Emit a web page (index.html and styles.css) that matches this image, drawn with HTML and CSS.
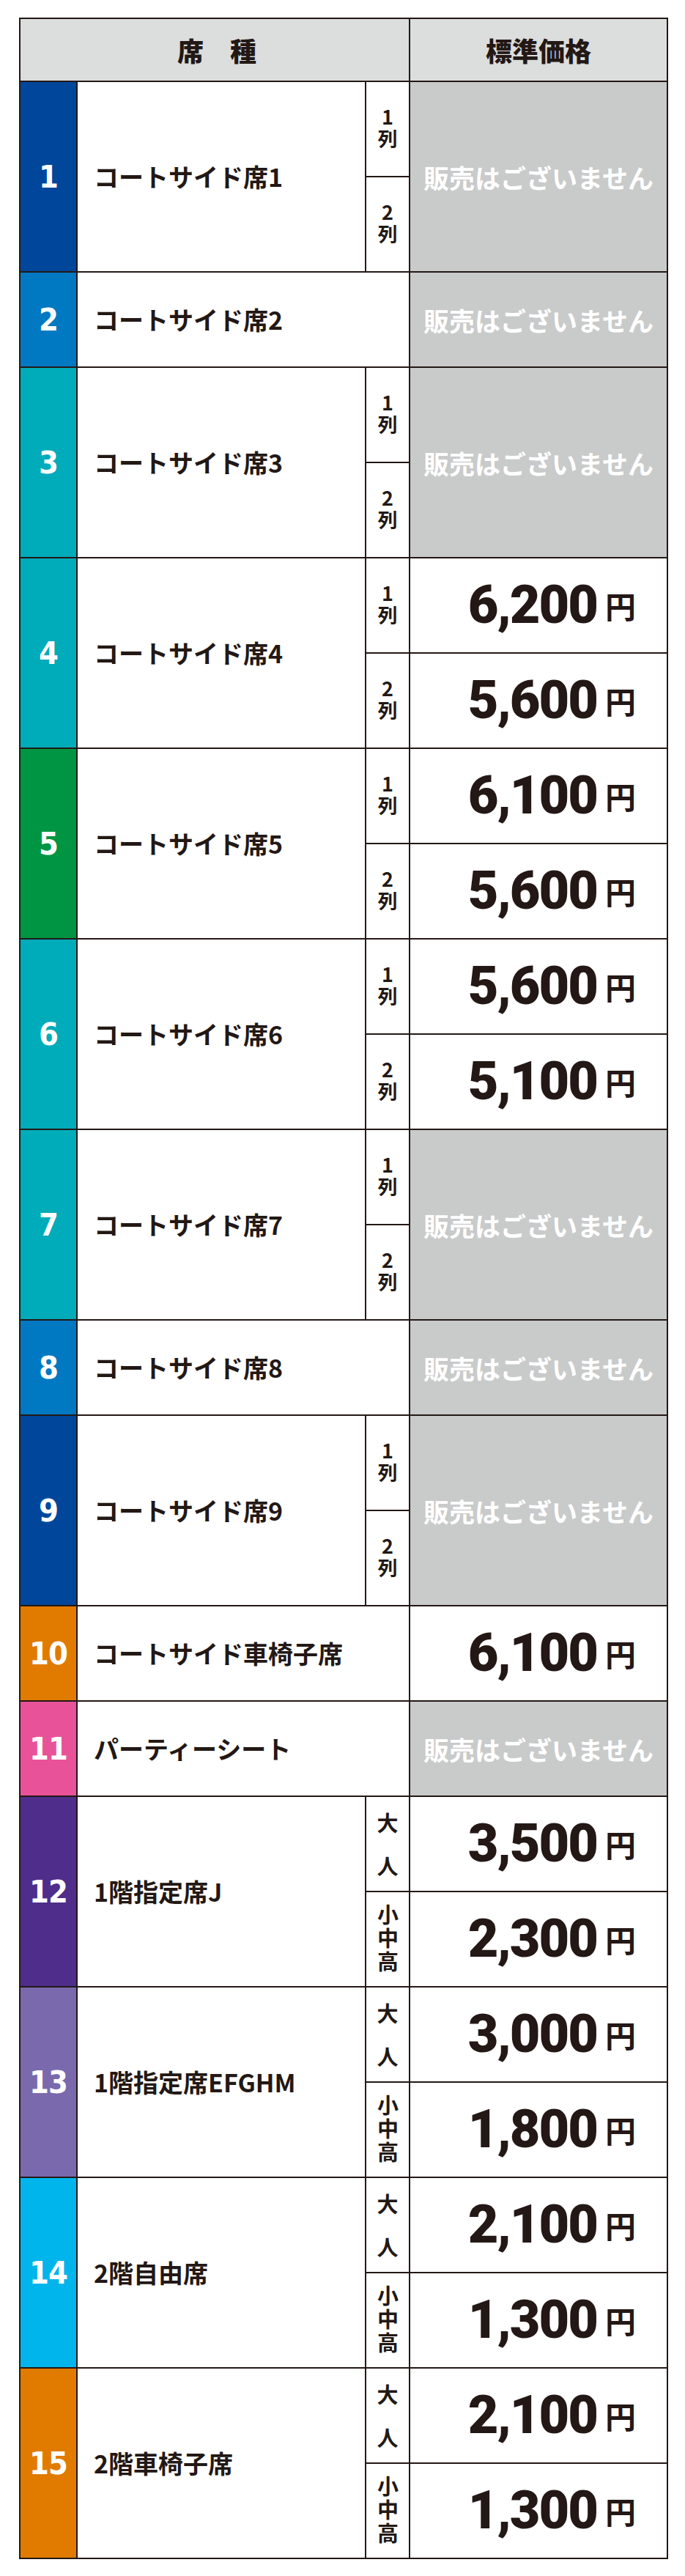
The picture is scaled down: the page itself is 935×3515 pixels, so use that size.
FILE: index.html
```html
<!DOCTYPE html>
<html lang="ja">
<head>
<meta charset="utf-8">
<title>席種・標準価格</title>
<link rel="stylesheet" href="styles.css">
</head>
<body>
<div class="price-table">
  <div class="head head-seat">席　種</div>
  <div class="head head-price">標準価格</div>

  <div class="num c1 tall">1</div>
  <div class="name tall">コートサイド席1</div>
  <div class="sub"><span class="v">1列</span></div>
  <div class="none tall">販売はございません</div>
  <div class="sub"><span class="v">2列</span></div>

  <div class="num c2">2</div>
  <div class="name wide">コートサイド席2</div>
  <div class="none">販売はございません</div>

  <div class="num c3 tall">3</div>
  <div class="name tall">コートサイド席3</div>
  <div class="sub"><span class="v">1列</span></div>
  <div class="none tall">販売はございません</div>
  <div class="sub"><span class="v">2列</span></div>

  <div class="num c4 tall">4</div>
  <div class="name tall">コートサイド席4</div>
  <div class="sub"><span class="v">1列</span></div>
  <div class="price">6,200<span class="yen">円</span></div>
  <div class="sub"><span class="v">2列</span></div>
  <div class="price">5,600<span class="yen">円</span></div>

  <div class="num c5 tall">5</div>
  <div class="name tall">コートサイド席5</div>
  <div class="sub"><span class="v">1列</span></div>
  <div class="price">6,100<span class="yen">円</span></div>
  <div class="sub"><span class="v">2列</span></div>
  <div class="price">5,600<span class="yen">円</span></div>

  <div class="num c6 tall">6</div>
  <div class="name tall">コートサイド席6</div>
  <div class="sub"><span class="v">1列</span></div>
  <div class="price">5,600<span class="yen">円</span></div>
  <div class="sub"><span class="v">2列</span></div>
  <div class="price">5,100<span class="yen">円</span></div>

  <div class="num c7 tall">7</div>
  <div class="name tall">コートサイド席7</div>
  <div class="sub"><span class="v">1列</span></div>
  <div class="none tall">販売はございません</div>
  <div class="sub"><span class="v">2列</span></div>

  <div class="num c8">8</div>
  <div class="name wide">コートサイド席8</div>
  <div class="none">販売はございません</div>

  <div class="num c9 tall">9</div>
  <div class="name tall">コートサイド席9</div>
  <div class="sub"><span class="v">1列</span></div>
  <div class="none tall">販売はございません</div>
  <div class="sub"><span class="v">2列</span></div>

  <div class="num c10">10</div>
  <div class="name wide">コートサイド車椅子席</div>
  <div class="price">6,100<span class="yen">円</span></div>

  <div class="num c11">11</div>
  <div class="name wide">パーティーシート</div>
  <div class="none">販売はございません</div>

  <div class="num c12 tall">12</div>
  <div class="name tall">1階指定席J</div>
  <div class="sub adult"><span>大</span><span>人</span></div>
  <div class="price">3,500<span class="yen">円</span></div>
  <div class="sub"><span class="v age">小中高</span></div>
  <div class="price">2,300<span class="yen">円</span></div>

  <div class="num c13 tall">13</div>
  <div class="name tall">1階指定席EFGHM</div>
  <div class="sub adult"><span>大</span><span>人</span></div>
  <div class="price">3,000<span class="yen">円</span></div>
  <div class="sub"><span class="v age">小中高</span></div>
  <div class="price">1,800<span class="yen">円</span></div>

  <div class="num c14 tall">14</div>
  <div class="name tall">2階自由席</div>
  <div class="sub adult"><span>大</span><span>人</span></div>
  <div class="price">2,100<span class="yen">円</span></div>
  <div class="sub"><span class="v age">小中高</span></div>
  <div class="price">1,300<span class="yen">円</span></div>

  <div class="num c15 tall">15</div>
  <div class="name tall">2階車椅子席</div>
  <div class="sub adult"><span>大</span><span>人</span></div>
  <div class="price">2,100<span class="yen">円</span></div>
  <div class="sub"><span class="v age">小中高</span></div>
  <div class="price">1,300<span class="yen">円</span></div>
</div>
</body>
</html>
```

FILE: styles.css
```css
html, body {
  margin: 0;
  padding: 0;
  background: #ffffff;
}

body {
  font-family: "Noto Sans CJK JP", "Noto Sans", sans-serif;
  color: #231815;
}

.price-table {
  display: grid;
  grid-template-columns: 76px 392px 58px 350px;
  grid-template-rows: 84px;
  grid-auto-rows: 128px;
  gap: 2px;
  padding: 2px;
  width: max-content;
  margin: 24px 0 0 26px;
  background: #231815;
}

.price-table > div {
  display: flex;
  align-items: center;
  background: #ffffff;
}

.price-table > .head {
  justify-content: center;
  background: #dcdddd;
  font-size: 36px;
  font-weight: 900;
  line-height: 1;
}

.head-seat {
  grid-column: span 3;
  padding-left: 6px;
}

.tall {
  grid-row: span 2;
}

.wide {
  grid-column: span 2;
}

.price-table > .num {
  justify-content: center;
  color: #ffffff;
  font-family: "Liberation Sans Narrow", "DejaVu Sans Condensed", "Roboto", sans-serif;
  font-stretch: condensed;
  font-weight: 700;
  font-size: 43px;
  letter-spacing: -1px;
  line-height: 1;
}

.price-table > .c1 { background: #00479b; }
.price-table > .c2 { background: #0079c2; }
.price-table > .c3 { background: #00abba; }
.price-table > .c4 { background: #00abba; }
.price-table > .c5 { background: #009543; }
.price-table > .c6 { background: #00abba; }
.price-table > .c7 { background: #00abba; }
.price-table > .c8 { background: #0079c2; }
.price-table > .c9 { background: #00479b; }
.price-table > .c10 { background: #e17b00; }
.price-table > .c11 { background: #e85298; }
.price-table > .c12 { background: #4f2d8b; }
.price-table > .c13 { background: #7a69ad; }
.price-table > .c14 { background: #00b5ec; }
.price-table > .c15 { background: #e17b00; }

.name {
  padding-left: 22px;
  font-size: 34px;
  font-weight: 700;
  line-height: 1;
  white-space: nowrap;
}

.price-table > .sub {
  justify-content: center;
  font-size: 27px;
  font-weight: 700;
  line-height: 1;
}

.v {
  writing-mode: vertical-rl;
  text-orientation: upright;
  letter-spacing: 3px;
  line-height: 1;
}

.v.age {
  font-size: 29px;
  letter-spacing: 3px;
}

.price-table > .adult {
  flex-direction: column;
  gap: 30px;
  font-size: 29px;
  line-height: 1;
}

.price-table > .none {
  justify-content: center;
  background: #c9caca;
  color: #ffffff;
  font-size: 35px;
  font-weight: 700;
  line-height: 1;
  white-space: nowrap;
}

.price-table > .price {
  justify-content: flex-end;
  align-items: center;
  padding-right: 42px;
  font-family: "Roboto", "Inter", "Liberation Sans", sans-serif;
  font-weight: 900;
  font-size: 72px;
  line-height: 1;
  letter-spacing: -2px;
  white-space: nowrap;
}

.yen {
  margin-left: 11px;
  font-family: "Noto Sans CJK JP", sans-serif;
  font-weight: 700;
  font-size: 42px;
  letter-spacing: 0;
}
```
